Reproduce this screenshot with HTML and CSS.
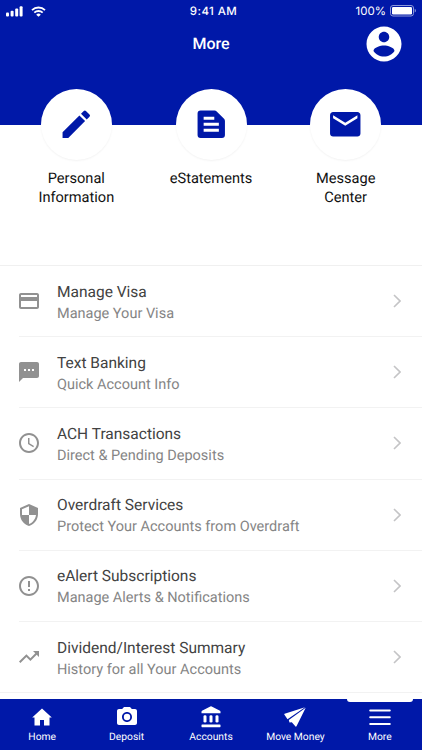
FILE: index.html
```html
<!DOCTYPE html>
<html lang="en">
<head>
    <meta charset="UTF-8">
    <meta name="viewport" content="width=device-width, initial-scale=1.0">
    <title>More</title>
    <link rel="stylesheet" href="styles.css">
</head>
<body>
    <header class="header">
        <div class="status-bar">
            <div class="status-left">
                <svg class="signal" viewBox="0 0 17 11">
                    <rect x="0" y="6.6" width="3" height="4" rx="1"/>
                    <rect x="4.6" y="4.8" width="3" height="5.8" rx="1"/>
                    <rect x="9.2" y="2.6" width="3" height="8" rx="1"/>
                    <rect x="13.6" y="0.2" width="3" height="10.4" rx="1"/>
                </svg>
                <svg class="wifi" viewBox="0 0 15 11">
                    <path d="M1 4.1a9.4 9.4 0 0 1 13 0M3.3 6.7a6.1 6.1 0 0 1 8.4 0"/>
                    <path class="wifi-dot" d="M7.5 10.8L5.2 8.7a3.3 3.3 0 0 1 4.6 0z"/>
                </svg>
            </div>
            <div class="status-time">9:41 AM</div>
            <div class="status-right">
                <span class="percent">100%</span>
                <svg class="battery" viewBox="0 0 27 12">
                    <rect class="battery-case" x="0.5" y="0.5" width="23" height="10.5" rx="2.5"/>
                    <rect x="2" y="2" width="20" height="7.5" rx="1.2"/>
                    <path class="battery-tip" d="M24.7 3.8c1.7.6 1.7 3.2 0 3.8z"/>
                </svg>
            </div>
        </div>
        <div class="title-bar">
            <h1>More</h1>
            <svg class="avatar" viewBox="0 0 24 24"><path d="M12 2C6.48 2 2 6.48 2 12s4.48 10 10 10 10-4.48 10-10S17.52 2 12 2zm0 3c1.66 0 3 1.34 3 3s-1.34 3-3 3-3-1.34-3-3 1.34-3 3-3zm0 14.2c-2.5 0-4.71-1.28-6-3.22.03-1.99 4-3.08 6-3.08 1.99 0 5.97 1.09 6 3.08-1.29 1.94-3.5 3.22-6 3.22z"/></svg>
        </div>
    </header>

    <div class="shortcuts">
        <a class="shortcut">
            <span class="circle">
                <svg viewBox="0 0 24 24"><path d="M3 17.25V21h3.75L17.81 9.94l-3.75-3.75L3 17.25zM20.71 7.04a1 1 0 0 0 0-1.41l-2.34-2.34a1 1 0 0 0-1.41 0l-1.83 1.83 3.75 3.75 1.83-1.83z"/></svg>
            </span>
            <span class="shortcut-label">Personal<br>Information</span>
        </a>
        <a class="shortcut">
            <span class="circle">
                <svg viewBox="0 0 24 24"><path d="M20.41 8.41l-4.83-4.83A2 2 0 0 0 14.17 3H5a2 2 0 0 0-2 2v14a2 2 0 0 0 2 2h14a2 2 0 0 0 2-2V9.83a2 2 0 0 0-.59-1.42zM7 7h7v2H7V7zm10 10H7v-2h10v2zm0-4H7v-2h10v2z"/></svg>
            </span>
            <span class="shortcut-label">eStatements</span>
        </a>
        <a class="shortcut">
            <span class="circle">
                <svg class="mail" viewBox="0 0 24 24"><path d="M20 4H4c-1.1 0-2 .9-2 2v12c0 1.1.9 2 2 2h16c1.1 0 2-.9 2-2V6c0-1.1-.9-2-2-2zm0 4l-8 5-8-5V6l8 5 8-5v2z"/></svg>
            </span>
            <span class="shortcut-label">Message<br>Center</span>
        </a>
    </div>

    <div class="list">
        <a class="row">
            <svg class="row-icon" viewBox="0 0 24 24"><path d="M20 4H4c-1.11 0-1.99.89-1.99 2L2 18c0 1.11.89 2 2 2h16c1.11 0 2-.89 2-2V6c0-1.11-.89-2-2-2zm0 14H4v-6h16v6zm0-10H4V6h16v2z"/></svg>
            <div class="row-text">
                <div class="row-title">Manage Visa</div>
                <div class="row-sub">Manage Your Visa</div>
            </div>
            <svg class="chevron" viewBox="0 0 8 14"><path d="M1 1l6 6-6 6"/></svg>
        </a>
        <a class="row">
            <svg class="row-icon" viewBox="0 0 24 24"><path d="M20 2H4c-1.1 0-1.99.9-1.99 2L2 22l4-4h14c1.1 0 2-.9 2-2V4c0-1.1-.9-2-2-2zM9 11H7V9h2v2zm4 0h-2V9h2v2zm4 0h-2V9h2v2z"/></svg>
            <div class="row-text">
                <div class="row-title">Text Banking</div>
                <div class="row-sub">Quick Account Info</div>
            </div>
            <svg class="chevron" viewBox="0 0 8 14"><path d="M1 1l6 6-6 6"/></svg>
        </a>
        <a class="row">
            <svg class="row-icon" viewBox="0 0 24 24"><path d="M11.99 2C6.47 2 2 6.48 2 12s4.47 10 9.99 10C17.52 22 22 17.52 22 12S17.52 2 11.99 2zM12 20c-4.42 0-8-3.58-8-8s3.58-8 8-8 8 3.58 8 8-3.58 8-8 8zm.5-13H11v6l5.25 3.15.75-1.23-4.5-2.67z"/></svg>
            <div class="row-text">
                <div class="row-title">ACH Transactions</div>
                <div class="row-sub">Direct &amp; Pending Deposits</div>
            </div>
            <svg class="chevron" viewBox="0 0 8 14"><path d="M1 1l6 6-6 6"/></svg>
        </a>
        <a class="row">
            <svg class="row-icon" viewBox="0 0 24 24"><path d="M12 1L3 5v6c0 5.55 3.84 10.74 9 12 5.16-1.26 9-6.45 9-12V5l-9-4zm0 10.99h7c-.53 4.12-3.28 7.79-7 8.94V12H5V6.3l7-3.11v8.8z"/></svg>
            <div class="row-text">
                <div class="row-title">Overdraft Services</div>
                <div class="row-sub">Protect Your Accounts from Overdraft</div>
            </div>
            <svg class="chevron" viewBox="0 0 8 14"><path d="M1 1l6 6-6 6"/></svg>
        </a>
        <a class="row">
            <svg class="row-icon" viewBox="0 0 24 24"><path d="M11 15h2v2h-2zm0-8h2v6h-2zm.99-5C6.47 2 2 6.48 2 12s4.47 10 9.99 10C17.52 22 22 17.52 22 12S17.52 2 11.99 2zM12 20c-4.42 0-8-3.58-8-8s3.58-8 8-8 8 3.58 8 8-3.58 8-8 8z"/></svg>
            <div class="row-text">
                <div class="row-title">eAlert Subscriptions</div>
                <div class="row-sub">Manage Alerts &amp; Notifications</div>
            </div>
            <svg class="chevron" viewBox="0 0 8 14"><path d="M1 1l6 6-6 6"/></svg>
        </a>
        <a class="row">
            <svg class="row-icon" viewBox="0 0 24 24"><path d="M16 6l2.29 2.29-4.88 4.88-4-4L2 16.59 3.41 18l6-6 4 4 6.3-6.29L22 12V6z"/></svg>
            <div class="row-text">
                <div class="row-title">Dividend/Interest Summary</div>
                <div class="row-sub">History for all Your Accounts</div>
            </div>
            <svg class="chevron" viewBox="0 0 8 14"><path d="M1 1l6 6-6 6"/></svg>
        </a>
    </div>

    <nav class="tabs">
        <a class="tab">
            <svg viewBox="0 0 24 24"><path d="M10 20.5v-5.500h4v5.500h5.500v-8h2.300L12 3.500 2.200 12.500h2.300v8z"/></svg>
            <span>Home</span>
        </a>
        <a class="tab">
            <svg viewBox="0 0 24 24"><circle cx="12" cy="12" r="3.2"/><path d="M9 2L7.17 4H4c-1.1 0-2 .9-2 2v12c0 1.1.9 2 2 2h16c1.1 0 2-.9 2-2V6c0-1.1-.9-2-2-2h-3.17L15 2H9zm3 15c-2.76 0-5-2.24-5-5s2.24-5 5-5 5 2.24 5 5-2.24 5-5 5z"/></svg>
            <span>Deposit</span>
        </a>
        <a class="tab">
            <svg viewBox="0 0 24 24">
                <path d="M11.300 1.500Q12 1.100 12.700 1.500L21 5.800Q21.500 6.100 21.500 6.700V8.300h-19V6.700Q2.500 6.100 3 5.800z"/>
                <rect x="4.500" y="10.300" width="3" height="7.200" rx="1.300"/>
                <rect x="10.500" y="10.300" width="3" height="7.200" rx="1.300"/>
                <rect x="16.500" y="10.300" width="3" height="7.200" rx="1.300"/>
                <rect x="2.500" y="19.400" width="19" height="2.800" rx="0.600"/>
            </svg>
            <span>Accounts</span>
        </a>
        <a class="tab">
            <svg viewBox="0 0 24 24"><path d="M22 2.300L1.600 8.700Q1 9 1.300 9.500L4.500 14.300zM22.700 2.800L5.800 14.900 6.500 17.600 8.800 17.300 12.500 21.500Q13.100 22 13.500 21.200z"/></svg>
            <span>Move Money</span>
        </a>
        <a class="tab active">
            <svg viewBox="0 0 24 24"><path class="menu-lines" d="M2.200 5.500h19.600M2.200 12.200h19.600M2.200 18.900h19.600"/></svg>
            <span>More</span>
        </a>
    </nav>
</body>
</html>
```
FILE: styles.css
```css
* {
    box-sizing: border-box;
}
body {
    margin: 0;
    height: 750px;
    overflow: hidden;
    display: flex;
    flex-direction: column;
    background: #fff;
    font-family: Roboto, sans-serif;
    text-rendering: geometricPrecision;
}
svg {
    display: block;
    flex: none;
}

/* header */
.header {
    height: 125px;
    flex: none;
    background: #0018a8;
    color: #fff;
}
.header svg {
    fill: #fff;
}
.status-bar {
    height: 22px;
    display: grid;
    grid-template-columns: 1fr auto 1fr;
    align-items: center;
    padding: 0 5px 0 6px;
    font-family: Inter, sans-serif;
    font-size: 11.5px;
}
.status-left {
    display: flex;
    gap: 8px;
}
.signal {
    width: 17px;
    height: 11px;
}
.wifi {
    width: 15px;
    height: 11px;
}
.header .wifi path {
    fill: none;
    stroke: #fff;
    stroke-width: 1.8;
}
.header .wifi .wifi-dot {
    fill: #fff;
    stroke: none;
}
.status-time {
    padding-left: 4px;
    font-weight: 500;
    letter-spacing: 0.4px;
}
.status-right {
    display: flex;
    justify-content: flex-end;
    align-items: center;
    gap: 4px;
}
.battery {
    width: 27px;
    height: 12px;
}
.header .battery-case {
    fill: none;
    stroke: #8c98da;
}
.header .battery-tip {
    fill: #8c98da;
}
.title-bar {
    height: 43px;
    display: grid;
    grid-template-columns: 1fr auto 1fr;
    align-items: center;
    padding: 0 17px;
}
.title-bar h1 {
    grid-column: 2;
    margin: 0;
    font-size: 16px;
    font-weight: 500;
}
.avatar {
    width: 42px;
    height: 42px;
    justify-self: end;
}

/* round shortcuts */
.shortcuts {
    position: relative;
    height: 176px;
    flex: none;
    margin-top: -36px;
    padding: 0 9px;
    display: flex;
}
.shortcut {
    flex: 1;
    display: flex;
    flex-direction: column;
    align-items: center;
}
.circle {
    width: 71px;
    height: 71px;
    border-radius: 50%;
    background: #fff;
    box-shadow: 0 1px 2px rgba(0, 0, 0, 0.05);
    display: flex;
    align-items: center;
    justify-content: center;
}
.circle svg {
    width: 36.5px;
    height: 36.5px;
    fill: #0018a8;
}
.shortcut-label {
    margin-top: 9px;
    font-size: 14.6px;
    line-height: 19px;
    text-align: center;
    color: #111;
}

/* menu list */
.list {
    height: 434px;
    flex: none;
    border-top: 1px solid #f0f0f0;
}
.row {
    height: 71.2px;
    display: flex;
    align-items: center;
    margin-left: 19px;
    padding-right: 21px;
    border-bottom: 1px solid #f2f2f2;
}
.row:last-child {
    margin-left: 0;
    padding-left: 19px;
}
.row-icon {
    width: 24px;
    height: 24px;
    margin-left: -2px;
    fill: #919191;
}
.row-text {
    flex: 1;
    margin-left: 16px;
    padding-top: 3px;
    line-height: 22px;
}
.row-title {
    font-size: 15.5px;
    color: #424242;
}
.row-sub {
    font-size: 14.5px;
    color: #858585;
}
.chevron {
    width: 8px;
    height: 14px;
    fill: none;
    stroke: #c4c4c6;
    stroke-width: 1.6;
}

/* bottom tabs */
.tabs {
    height: 51px;
    flex: none;
    display: flex;
    background: #0018a8;
    color: #fff;
}
.tab {
    position: relative;
    flex: 1;
    display: flex;
    flex-direction: column;
    align-items: center;
    padding-top: 6px;
    font-size: 10.3px;
    line-height: 13px;
    white-space: nowrap;
}
.tab svg {
    width: 24px;
    height: 24px;
    margin-bottom: 1px;
    fill: #fff;
}
.tab .menu-lines {
    stroke: #fff;
    stroke-width: 2;
    stroke-linecap: round;
}
.tab.active::before {
    content: "";
    position: absolute;
    top: 0;
    left: 9px;
    right: 9px;
    height: 3px;
    background: #fff;
    border-radius: 0 0 3px 3px;
}
```
